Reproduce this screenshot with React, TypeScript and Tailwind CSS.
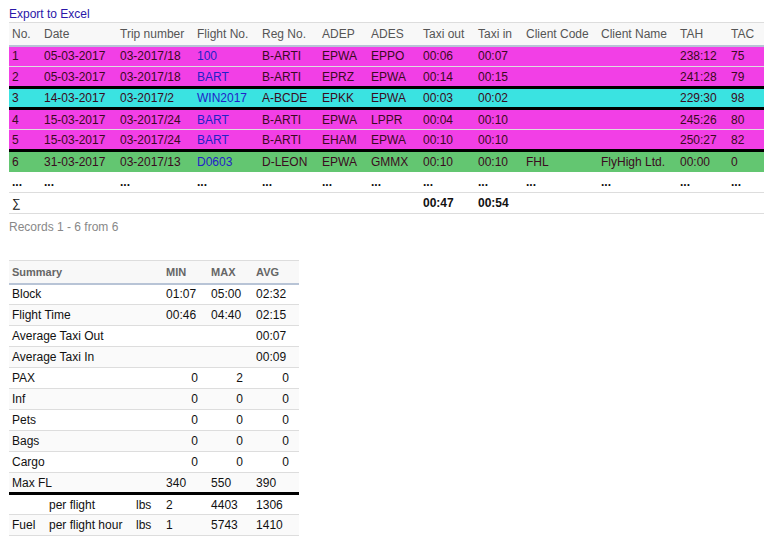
const cols = [32, 76, 77, 65, 60, 49, 52, 55, 48, 75, 79, 51, 36]
const heads = ["No.", "Date", "Trip number", "Flight No.", "Reg No.", "ADEP", "ADES", "Taxi out", "Taxi in", "Client Code", "Client Name", "TAH", "TAC"]

const rows = [
  { c: "bg-[#f23fe6]", top: false, d: ["1", "05-03-2017", "03-2017/18", "100", "B-ARTI", "EPWA", "EPPO", "00:06", "00:07", "", "", "238:12", "75"] },
  { c: "bg-[#f23fe6]", top: false, d: ["2", "05-03-2017", "03-2017/18", "BART", "B-ARTI", "EPRZ", "EPWA", "00:14", "00:15", "", "", "241:28", "79"] },
  { c: "bg-[#3ae3e1]", top: true, d: ["3", "14-03-2017", "03-2017/2", "WIN2017", "A-BCDE", "EPKK", "EPWA", "00:03", "00:02", "", "", "229:30", "98"] },
  { c: "bg-[#f23fe6]", top: true, d: ["4", "15-03-2017", "03-2017/24", "BART", "B-ARTI", "EPWA", "LPPR", "00:04", "00:10", "", "", "245:26", "80"] },
  { c: "bg-[#f23fe6]", top: false, d: ["5", "15-03-2017", "03-2017/24", "BART", "B-ARTI", "EHAM", "EPWA", "00:10", "00:10", "", "", "250:27", "82"] },
  { c: "bg-[#63c671]", top: true, d: ["6", "31-03-2017", "03-2017/13", "D0603", "D-LEON", "EPWA", "GMMX", "00:10", "00:10", "FHL", "FlyHigh Ltd.", "00:00", "0"] },
]

const summary: [string, string, string, string, boolean][] = [
  ["Block", "01:07", "05:00", "02:32", false],
  ["Flight Time", "00:46", "04:40", "02:15", false],
  ["Average Taxi Out", "", "", "00:07", false],
  ["Average Taxi In", "", "", "00:09", false],
  ["PAX", "0", "2", "0", true],
  ["Inf", "0", "0", "0", true],
  ["Pets", "0", "0", "0", true],
  ["Bags", "0", "0", "0", true],
  ["Cargo", "0", "0", "0", true],
  ["Max FL", "340", "550", "390", false],
]

export default function App() {
  return (
    <div className="bg-white w-[773px] h-[545px] text-[12px] text-[#111] pl-[9px] pt-[7px]" style={{ fontFamily: '"Liberation Sans", Arial, sans-serif' }}>
      <a className="text-[#2a17a8] block h-[15px] leading-[15px]">Export to Excel</a>
      <table className="border-collapse table-fixed w-[755px]">
        <colgroup>
          {cols.map((w, i) => <col key={i} style={{ width: w }} />)}
        </colgroup>
        <thead>
          <tr className="bg-[#f8f8f8] h-[23px] border-t border-[#ddd] border-b-2 border-b-[#b8c4d6]">
            {heads.map((h) => <th key={h} className="text-left font-normal text-[#555] px-[3px] whitespace-nowrap">{h}</th>)}
          </tr>
        </thead>
        <tbody>
          {rows.map((r, i) => (
            <tr key={i} className={`${r.c} h-[21px] ${r.top ? "border-t-[3px] border-t-black" : "border-t border-t-[#ddd]"}`}>
              {r.d.map((v, j) => (
                <td key={j} className={`px-[3px] whitespace-nowrap ${j === 3 ? "text-[#2222c8]" : "text-[#3a0a20]"}`}>{v}</td>
              ))}
            </tr>
          ))}
          <tr className="h-[21px] border-b border-[#ddd]">
            {heads.map((h) => <td key={h} className="px-[3px] font-bold leading-none">...</td>)}
          </tr>
          <tr className="h-[21px] border-b border-[#ddd]">
            <td className="px-[3px]">∑</td>
            <td /><td /><td /><td /><td /><td />
            <td className="px-[3px] font-bold">00:47</td>
            <td className="px-[3px] font-bold">00:54</td>
            <td /><td /><td /><td />
          </tr>
        </tbody>
      </table>
      <div className="text-[#888] mt-[6px] h-[15px] leading-[15px]">Records 1 - 6 from 6</div>
      <table className="border-collapse table-fixed w-[290px] mt-[25px]">
        <colgroup>
          <col style={{ width: 37 }} />
          <col style={{ width: 87 }} />
          <col style={{ width: 30 }} />
          <col style={{ width: 45 }} />
          <col style={{ width: 45 }} />
          <col style={{ width: 46 }} />
        </colgroup>
        <thead>
          <tr className="bg-[#f8f8f8] h-[23px] border-t border-[#ddd] border-b-2 border-b-[#b8c4d6] text-[11px] font-bold text-[#666]">
            <th colSpan={3} className="text-left px-[3px]">Summary</th>
            <th className="text-left px-[3px]">MIN</th>
            <th className="text-left px-[3px]">MAX</th>
            <th className="text-left px-[3px]">AVG</th>
          </tr>
        </thead>
        <tbody>
          {summary.map(([l, a, b, c, right], i) => (
            <tr key={l} className={`h-[21px] border-b border-[#ddd] ${i % 2 ? "bg-[#fafafa]" : ""} ${i === 9 ? "border-b-[3px] border-b-black" : ""}`}>
              <td colSpan={3} className="px-[3px]">{l}</td>
              {[a, b, c].map((v, k) => (
                <td key={k} className={`px-[3px] ${right ? "text-right pr-[10px]" : ""}`}>{v}</td>
              ))}
            </tr>
          ))}
          <tr className="h-[21px] border-b border-[#ddd]">
            <td />
            <td className="px-[3px]">per flight</td>
            <td className="px-[3px]">lbs</td>
            <td className="px-[3px]">2</td>
            <td className="px-[3px]">4403</td>
            <td className="px-[3px]">1306</td>
          </tr>
          <tr className="h-[21px] border-b border-[#ddd] bg-[#fafafa]">
            <td className="px-[3px]">Fuel</td>
            <td className="px-[3px] whitespace-nowrap">per flight hour</td>
            <td className="px-[3px]">lbs</td>
            <td className="px-[3px]">1</td>
            <td className="px-[3px]">5743</td>
            <td className="px-[3px]">1410</td>
          </tr>
        </tbody>
      </table>
    </div>
  )
}
